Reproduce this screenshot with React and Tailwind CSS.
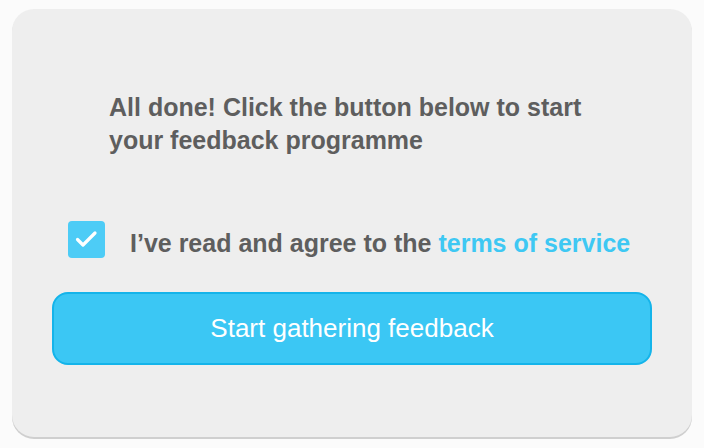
import React, { useState } from 'react'

export default function App() {
  const [agreed, setAgreed] = useState(true)

  return (
    <div className="min-h-screen bg-[#fbfbfb] pt-[9px] pl-[12px]" style={{ fontFamily: '"Liberation Sans", Arial, sans-serif' }}>
      <div className="w-[680px] h-[428px] rounded-[22px] bg-[#eeeeee] shadow-[0_2px_0_#cfcfcf] px-10 pt-[82px]">
        <p className="ml-[57px] w-[500px] text-[25px] leading-[33px] font-bold text-[#5e5e5e]">
          All done! Click the button below to start your feedback programme
        </p>

        <label className="mt-[64px] ml-4 flex items-start gap-[25px] cursor-pointer">
          <button
            type="button"
            onClick={() => setAgreed(!agreed)}
            className={`w-[37px] h-[37px] rounded-[4px] flex items-center justify-center ${
              agreed ? 'bg-[#4dccf6]' : 'bg-white border border-gray-300'
            }`}
          >
            {agreed && (
              <svg width="37" height="37" viewBox="0 0 37 37" fill="none">
                <path d="M9.5 18.5l5.5 5.5 12-12" stroke="white" strokeWidth="3.2" strokeLinecap="round" strokeLinejoin="round" />
              </svg>
            )}
          </button>
          <span className="mt-[8px] text-[25px] leading-[29px] font-bold text-[#5e5e5e]">
            I’ve read and agree to the <span className="text-[#3ec8f3]">terms of service</span>
          </span>
        </label>

        <button
          type="button"
          className="mt-[34px] w-full h-[73px] rounded-[16px] bg-[#3bc7f4] border-2 border-[#14b4ea] text-white text-[26px]"
        >
          Start gathering feedback
        </button>
      </div>
    </div>
  )
}
